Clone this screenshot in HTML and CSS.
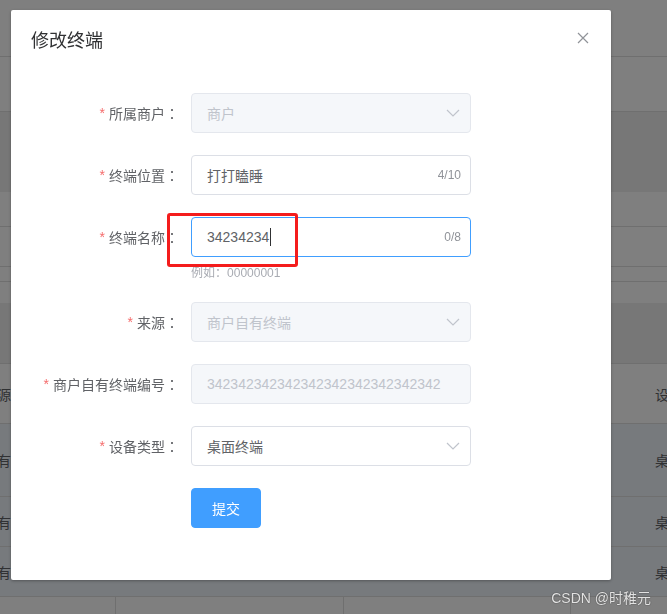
FILE: index.html
```html
<!DOCTYPE html>
<html lang="zh">
<head>
<meta charset="utf-8">
<title>修改终端</title>
<link rel="stylesheet" href="styles.css">
</head>
<body>
<div class="page">
  <div class="row r1"></div>
  <div class="row r2"></div>
  <div class="row r3 band noline"></div>
  <div class="row r4"></div>
  <div class="row r5"></div>
  <div class="row r6"></div>
  <div class="row r7 noline"></div>
  <div class="row r8 band"></div>
  <div class="row r9 cells"><div class="cell-l">来源</div><div></div><div class="cell-r">设备类型</div></div>
  <div class="row r10 cells hl"><div class="cell-l">自有</div><div></div><div class="cell-r">桌面终端</div></div>
  <div class="row r11 cells hl"><div class="cell-l">自有</div><div></div><div class="cell-r">桌面终端</div></div>
  <div class="row r12 cells hl"><div class="cell-l">自有</div><div></div><div class="cell-r">桌面终端</div></div>
  <div class="row r13 cols"><div></div><div></div><div></div><div></div></div>
</div>

<div class="mask"></div>
<div class="watermark">CSDN @时稚元</div>

<div class="dialog">
  <div class="dialog-header">
    <span class="dialog-title">修改终端</span>
    <button class="close" type="button" aria-label="关闭">
      <svg width="16" height="16" viewBox="0 0 16 16"><path d="M3 3 L13 13 M13 3 L3 13" stroke="#909399" stroke-width="1.2" fill="none"/></svg>
    </button>
  </div>
  <div class="dialog-body">
    <div class="form-item">
      <label class="label"><span class="req">*</span>所属商户<span class="colon">：</span></label>
      <div class="control">
        <div class="input disabled"><span>商户</span>
          <svg class="arrow" width="14" height="8" viewBox="0 0 14 8"><path d="M1 1 L7 7 L13 1" stroke="#c0c4cc" stroke-width="1.2" fill="none"/></svg>
        </div>
      </div>
    </div>
    <div class="form-item">
      <label class="label"><span class="req">*</span>终端位置<span class="colon">：</span></label>
      <div class="control">
        <div class="input"><span>打打瞌睡</span><span class="count">4/10</span></div>
      </div>
    </div>
    <div class="form-item">
      <label class="label"><span class="req">*</span>终端名称<span class="colon">：</span></label>
      <div class="control">
        <div class="input focus"><span>34234234</span><span class="caret"></span><span class="count">0/8</span></div>
        <div class="hint">例如<span class="colon">：</span>00000001</div>
      </div>
    </div>
    <div class="form-item">
      <label class="label"><span class="req">*</span>来源<span class="colon">：</span></label>
      <div class="control">
        <div class="input disabled"><span>商户自有终端</span>
          <svg class="arrow" width="14" height="8" viewBox="0 0 14 8"><path d="M1 1 L7 7 L13 1" stroke="#c0c4cc" stroke-width="1.2" fill="none"/></svg>
        </div>
      </div>
    </div>
    <div class="form-item">
      <label class="label"><span class="req">*</span>商户自有终端编号<span class="colon">：</span></label>
      <div class="control">
        <div class="input disabled"><span>342342342342342342342342342342</span></div>
      </div>
    </div>
    <div class="form-item">
      <label class="label"><span class="req">*</span>设备类型<span class="colon">：</span></label>
      <div class="control">
        <div class="input"><span>桌面终端</span>
          <svg class="arrow" width="14" height="8" viewBox="0 0 14 8"><path d="M1 1 L7 7 L13 1" stroke="#c0c4cc" stroke-width="1.2" fill="none"/></svg>
        </div>
      </div>
    </div>
    <div class="form-item">
      <div class="label"></div>
      <div class="control">
        <button class="btn" type="button">提交</button>
      </div>
    </div>
  </div>
  <div class="annot"></div>
</div>
</body>
</html>
```

FILE: styles.css
```css
* { box-sizing: border-box; }
html, body { margin: 0; padding: 0; }
body {
  width: 667px;
  height: 614px;
  overflow: hidden;
  position: relative;
  background: #fff;
  font-family: "Liberation Sans", "Noto Sans CJK SC", sans-serif;
  font-size: 14px;
  color: #606266;
}

/* background page */
.row { border-bottom: 1px solid #dedede; }
.noline { border-bottom: 0; }
.band { background: #eeeeee; }
.hl { background: #eef4fb; }
.r1 { height: 57px; }
.r2 { height: 55px; }
.r3 { height: 80px; }
.r4 { height: 35px; }
.r5 { height: 40px; }
.r6 { height: 15px; }
.r7 { height: 21px; }
.r8 { height: 61px; }
.r9 { height: 60px; }
.r10 { height: 73px; }
.r11 { height: 50px; }
.r12 { height: 50px; }
.r13 { height: 40px; }
.cells {
  display: grid;
  grid-template-columns: 11px 644px 12px;
  align-items: center;
}
.cell-l {
  display: flex;
  justify-content: flex-end;
  white-space: nowrap;
  font-family: "Noto Sans CJK SC", sans-serif;
}
.cell-r {
  white-space: nowrap;
  font-family: "Noto Sans CJK SC", sans-serif;
}
.cols {
  display: grid;
  grid-template-columns: 116px 228px 227px 1fr;
}
.cols > div { border-right: 1px solid #dedede; }
.cols > div:last-child { border-right: 0; }

.mask {
  position: fixed;
  inset: 0;
  background: rgba(0, 0, 0, 0.5);
}
.watermark {
  position: absolute;
  right: 16px;
  bottom: 6px;
  font-size: 14px;
  line-height: 20px;
  color: rgba(255, 255, 255, 0.85);
  text-shadow: 0 0 1px #444, 0 0 1px #444;
  font-family: "Liberation Sans", "Noto Sans CJK SC", sans-serif;
}

/* dialog */
.dialog {
  position: absolute;
  left: 11px;
  top: 10px;
  width: 600px;
  background: #fff;
  border-radius: 2px;
  box-shadow: 0 1px 3px rgba(0, 0, 0, 0.3);
}
.dialog-header {
  position: relative;
  height: 54px;
  padding: 17px 20px 0;
}
.dialog-title {
  display: block;
  height: 24px;
  font-family: "Noto Sans CJK SC", sans-serif;
  font-size: 18px;
  line-height: 24px;
  color: #303133;
}
.close {
  position: absolute;
  top: 20px;
  right: 20px;
  width: 16px;
  height: 16px;
  padding: 0;
  border: 0;
  background: none;
  display: flex;
}
.dialog-body {
  padding: 29px 20px 30px;
}
.form-item {
  display: flex;
  margin-bottom: 22px;
}
.label {
  width: 160px;
  height: 40px;
  padding-right: 12px;
  display: flex;
  align-items: center;
  justify-content: flex-end;
  color: #606266;
  font-family: "Noto Sans CJK SC", sans-serif;
  white-space: nowrap;
}
.req {
  color: #f56c6c;
  margin-right: 4px;
  font-family: "Liberation Sans", sans-serif;
}
.colon {
  font-family: "Noto Sans CJK TC", sans-serif;
}
.control { width: 280px; }
.input {
  position: relative;
  height: 40px;
  border: 1px solid #dcdfe6;
  border-radius: 4px;
  display: flex;
  align-items: center;
  padding: 0 15px;
  color: #606266;
  background: #fff;
  white-space: nowrap;
}
.input.disabled {
  background: #f5f7fa;
  border-color: #e4e7ed;
  color: #c0c4cc;
}
.input.focus { border-color: #409eff; }
.count {
  position: absolute;
  right: 9px;
  font-size: 12px;
  color: #909399;
}
.arrow {
  position: absolute;
  right: 10px;
  top: 15px;
}
.caret {
  display: inline-block;
  width: 1px;
  height: 18px;
  background: #303133;
  margin-left: 1px;
}
.hint {
  height: 23px;
  padding-top: 7px;
  font-size: 12px;
  line-height: 16px;
  color: #a8abb2;
  white-space: nowrap;
  overflow: hidden;
}
.btn {
  display: block;
  width: 70px;
  height: 40px;
  padding: 0;
  border: 1px solid #409eff;
  border-radius: 4px;
  background: #409eff;
  color: #fff;
  font-family: "Noto Sans CJK SC", sans-serif;
  font-size: 14px;
}
.annot {
  position: absolute;
  left: 156px;
  top: 203px;
  width: 131px;
  height: 54px;
  border: 3px solid #f41c1c;
  border-radius: 3px;
}
```
